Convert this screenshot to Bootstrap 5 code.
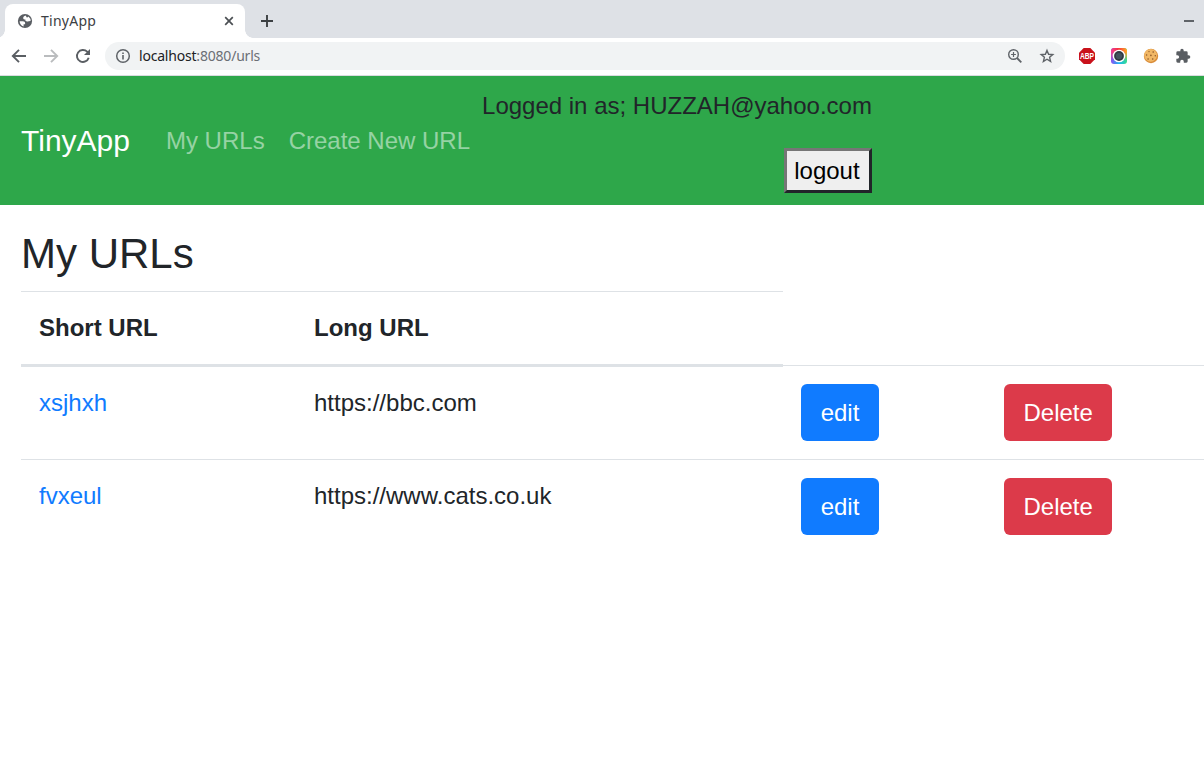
<!DOCTYPE html>
<html lang="en">
<head>
<meta charset="utf-8">
<meta name="viewport" content="width=device-width, initial-scale=1">
<title>TinyApp</title>
<link href="https://cdn.jsdelivr.net/npm/bootstrap@5.3.0/dist/css/bootstrap.min.css" rel="stylesheet">
<style>
  body { font-family: "Liberation Sans", Arial, sans-serif; font-size: 24px; line-height: 36px; color: #212529; overflow: hidden; height: 768px; }
  svg { display: block; flex: none; }
  /* browser frame */
  .chrome-ui { font-family: "Noto Sans", "Open Sans", sans-serif; font-size: 14px; line-height: 20px; color: #3c4043; }
  .tab-strip { height: 38px; background: #dee1e6; padding: 4px 9px 0 5px; }
  .page-tab { position: relative; width: 240px; height: 34px; background: #fff; border-radius: 8px 8px 0 0; padding: 0 10px 0 12px; }
  .page-tab::before, .page-tab::after { content: ""; position: absolute; bottom: 0; width: 8px; height: 8px; }
  .page-tab::before { left: -8px; background: radial-gradient(circle at 0 0, transparent 7.5px, #fff 8px); }
  .page-tab::after { right: -8px; background: radial-gradient(circle at 100% 0, transparent 7.5px, #fff 8px); }
  .tab-label { font-size: 14px; margin-left: 8px; letter-spacing: .25px; }
  .tool-row { height: 38px; background: #fff; border-bottom: 1px solid #dadce0; padding: 4px 13px 5px 11px; }
  .omnibox { width: 960px; height: 28px; border-radius: 14px; background: #f1f3f4; margin-left: 14px; padding: 0 10px; }
  .address { margin-left: 8px; color: #202124; letter-spacing: -.2px; }
  .address span { color: #6b6f74; }
  /* application */
  .app-nav { background: #2ea74a; padding: 12px 21px; height: 129px; --bs-navbar-nav-link-padding-x: 12px; }
  .app-nav .navbar-brand { font-size: 30px; line-height: 45px; color: #fff; margin-right: 24px; padding: 0; }
  .app-nav .nav-link { font-size: 24px; padding: 12px; color: rgba(255,255,255,.5); }
  .logout { border: 3px solid; border-color: #767676 #212529 #212529 #767676; background: #efefef; color: #000; padding: 1.5px 9px 1.5px 7px; height: 45px; width: 88px; margin-top: 24px; }
  .page-title { font-size: 42px; line-height: 50px; margin: 24px 0 12px 21px; font-weight: 400; }
  .url-table { table-layout: fixed; width: 1210px; margin: 0 0 0 21px; border-collapse: collapse; color: #212529; border-color: #dee2e6; }
  .url-table > :not(caption) > * > * { padding: 18px; border: 0; border-top: 1px solid #dee2e6; vertical-align: top; background: none; }
  .url-table > thead > tr > th { border-bottom: 3px solid #dee2e6; }
  .url-table a { color: #107bff; text-decoration: none; }
  .url-table .btn { font-size: 24px; line-height: 36px; padding: 9.5px 18.5px; border-radius: 6px; display: block; color: #fff; }
  .btn-edit { background: #107bff; width: 78px; }
  .btn-del { background: #dc3a4a; width: 108px; }
</style>
</head>
<body>
<header class="chrome-ui">
  <div class="tab-strip d-flex align-items-center">
    <div class="page-tab d-flex align-items-center">
      <svg width="16" height="16" viewBox="0 0 16 16"><circle cx="8" cy="8" r="7.1" fill="#5a5e63"/><path d="M2.6 8.2h3.200c1.500 0 2.300.7 2.300 1.900v1.100H6.600v2.300A6 6 0 0 1 2.600 8.200zM8.600 2.400C7 3 6.200 3.800 6.200 4.900c0 1.200.9 1.700 2.200 1.700v1.200c.9.900 2.200 1 3.200.4l2-.1A5.800 5.800 0 0 0 11.500 3.500c-.4.700-.9 1-1.700 1z" fill="#fff"/></svg>
      <span class="tab-label flex-grow-1">TinyApp</span>
      <svg width="12" height="12" viewBox="0 0 12 12"><path d="m2.200 2.200 7.600 7.600m0-7.600L2.200 9.800" stroke="#4b4f53" stroke-width="1.700"/></svg>
    </div>
    <svg class="ms-3 me-auto" width="12" height="12" viewBox="0 0 12 12"><path d="M6 0v12M0 6h12" stroke="#3c4043" stroke-width="1.900"/></svg>
    <svg width="12" height="12" viewBox="0 0 12 12"><path d="M1 6h10" stroke="#5f6368" stroke-width="2"/></svg>
  </div>
  <div class="tool-row d-flex align-items-center">
    <div class="d-flex gap-3">
      <svg width="16" height="16" viewBox="0 0 16 16"><path d="M15 8H2.300M8 1.800 1.800 8 8 14.200" fill="none" stroke="#5a5e63" stroke-width="1.900"/></svg>
      <svg width="16" height="16" viewBox="0 0 16 16"><path d="M1 8h12.700M8 1.800 14.200 8 8 14.200" fill="none" stroke="#babcbe" stroke-width="1.900"/></svg>
      <svg width="16" height="16" viewBox="0 0 16 16"><path d="M13.700 9.700A6 6 0 1 1 12.200 3.700L13.700 5.300" fill="none" stroke="#5a5e63" stroke-width="1.900"/><path d="M15 1v6H9z" fill="#5a5e63"/></svg>
    </div>
    <div class="omnibox d-flex align-items-center">
      <svg width="16" height="16" viewBox="0 0 16 16"><circle cx="8" cy="8" r="6.300" fill="none" stroke="#5f6368" stroke-width="1.500"/><path d="M8 7v4.500M8 4.400V6" stroke="#5f6368" stroke-width="1.600"/></svg>
      <div class="address flex-grow-1">localhost<span>:8080/urls</span></div>
      <svg width="16" height="16" viewBox="0 0 16 16"><circle cx="6.500" cy="6.500" r="4.800" fill="none" stroke="#5f6368" stroke-width="1.400"/><path d="m10 10 4.300 4.300" stroke="#5f6368" stroke-width="1.800"/><path d="M6.500 4.100v4.800M4.100 6.500h4.800" stroke="#5f6368" stroke-width="1.200"/></svg>
      <svg class="ms-3" width="16" height="16" viewBox="0 0 16 16"><path d="m8 2.400 1.600 3.900 4.200.3-3.200 2.700 1 4.100L8 11.200l-3.600 2.200 1-4.100-3.200-2.700 4.200-.3z" fill="none" stroke="#5f6368" stroke-width="1.400"/></svg>
    </div>
    <div class="d-flex gap-3 ms-auto">
      <svg width="16" height="16" viewBox="0 0 16 16"><path d="M4.700 0h6.600L16 4.700v6.600L11.300 16H4.700L0 11.300V4.700z" fill="#c9121b"/><text transform="translate(.9 11.100) scale(.76 1)" font-size="8.800" font-weight="700" fill="#fff" font-family="Liberation Sans, sans-serif">ABP</text></svg>
      <svg width="16" height="16" viewBox="0 0 16 16">
        <defs><linearGradient id="g1" x1="0" y1="0" x2="1" y2="0"><stop offset="0" stop-color="#ef3f9a"/><stop offset=".45" stop-color="#f7333f"/><stop offset="1" stop-color="#ffac24"/></linearGradient><linearGradient id="g2" x1="0" y1="0" x2="1" y2="0"><stop offset="0" stop-color="#8d50ef"/><stop offset=".5" stop-color="#1bb6f5"/><stop offset="1" stop-color="#36dd8b"/></linearGradient><linearGradient id="g3" x1="0" y1="0" x2="0" y2="1"><stop offset=".25" stop-color="#fff"/><stop offset=".8" stop-color="#000"/></linearGradient><mask id="fade"><path d="M0 0h16v16H0z" fill="url(#g3)"/></mask></defs>
        <rect width="16" height="16" rx="3" fill="url(#g2)"/><rect width="16" height="16" rx="3" fill="url(#g1)" mask="url(#fade)"/><circle cx="8" cy="8" r="6.300" fill="#fff"/><circle cx="8" cy="8" r="4.900" fill="#303b43"/><circle cx="8" cy="8" r="3.100" fill="#43535e"/></svg>
      <svg width="16" height="16" viewBox="0 0 16 16"><circle cx="8" cy="8" r="7.200" fill="#d98c39"/><circle cx="7.600" cy="7.300" r="6.400" fill="#f1b765"/><g fill="#8b5526"><circle cx="6" cy="3.600" r=".7"/><circle cx="10.200" cy="4" r=".8"/><circle cx="3.600" cy="7" r=".7"/><circle cx="7.900" cy="7.400" r=".8"/><circle cx="12.300" cy="7.800" r=".7"/><circle cx="5.100" cy="11" r=".8"/><circle cx="9.700" cy="11" r=".8"/></g></svg>
      <svg width="16" height="16" viewBox="0 0 24 24"><path d="M20.500 11H19V7a2 2 0 0 0-2-2h-4V3.500a2.500 2.500 0 0 0-5 0V5H4a2 2 0 0 0-2 2v3.800h1.500a2.700 2.700 0 0 1 0 5.400H2V20a2 2 0 0 0 2 2h3.800v-1.500a2.700 2.700 0 0 1 5.400 0V22H17a2 2 0 0 0 2-2v-4h1.500a2.500 2.500 0 0 0 0-5z" fill="#5a5e63"/></svg>
    </div>
  </div>
</header>
<nav class="app-nav navbar navbar-expand d-flex justify-content-start flex-nowrap">
  <a class="navbar-brand" href="#">TinyApp</a>
  <div class="navbar-nav">
    <a class="nav-link" href="#">My URLs</a>
    <a class="nav-link" href="#">Create New URL</a>
  </div>
  <form class="d-flex flex-column align-items-end">
    <span class="text-nowrap">Logged in as; HUZZAH@yahoo.com</span>
    <button class="logout" type="button">logout</button>
  </form>
</nav>
<main>
  <h3 class="page-title">My URLs</h3>
  <table class="table url-table">
    <colgroup><col style="width:275px"><col style="width:487px"><col style="width:203px"><col style="width:245px"></colgroup>
    <thead>
      <tr><th>Short URL</th><th>Long URL</th></tr>
    </thead>
    <tbody>
      <tr><td><a href="#">xsjhxh</a></td><td>https://bbc.com</td><td><button class="btn btn-edit" type="button">edit</button></td><td><button class="btn btn-del" type="button">Delete</button></td></tr>
      <tr><td><a href="#">fvxeul</a></td><td>https://www.cats.co.uk</td><td><button class="btn btn-edit" type="button">edit</button></td><td><button class="btn btn-del" type="button">Delete</button></td></tr>
    </tbody>
  </table>
</main>
<script src="https://cdn.jsdelivr.net/npm/bootstrap@5.3.0/dist/js/bootstrap.bundle.min.js"></script>
</body>
</html>
